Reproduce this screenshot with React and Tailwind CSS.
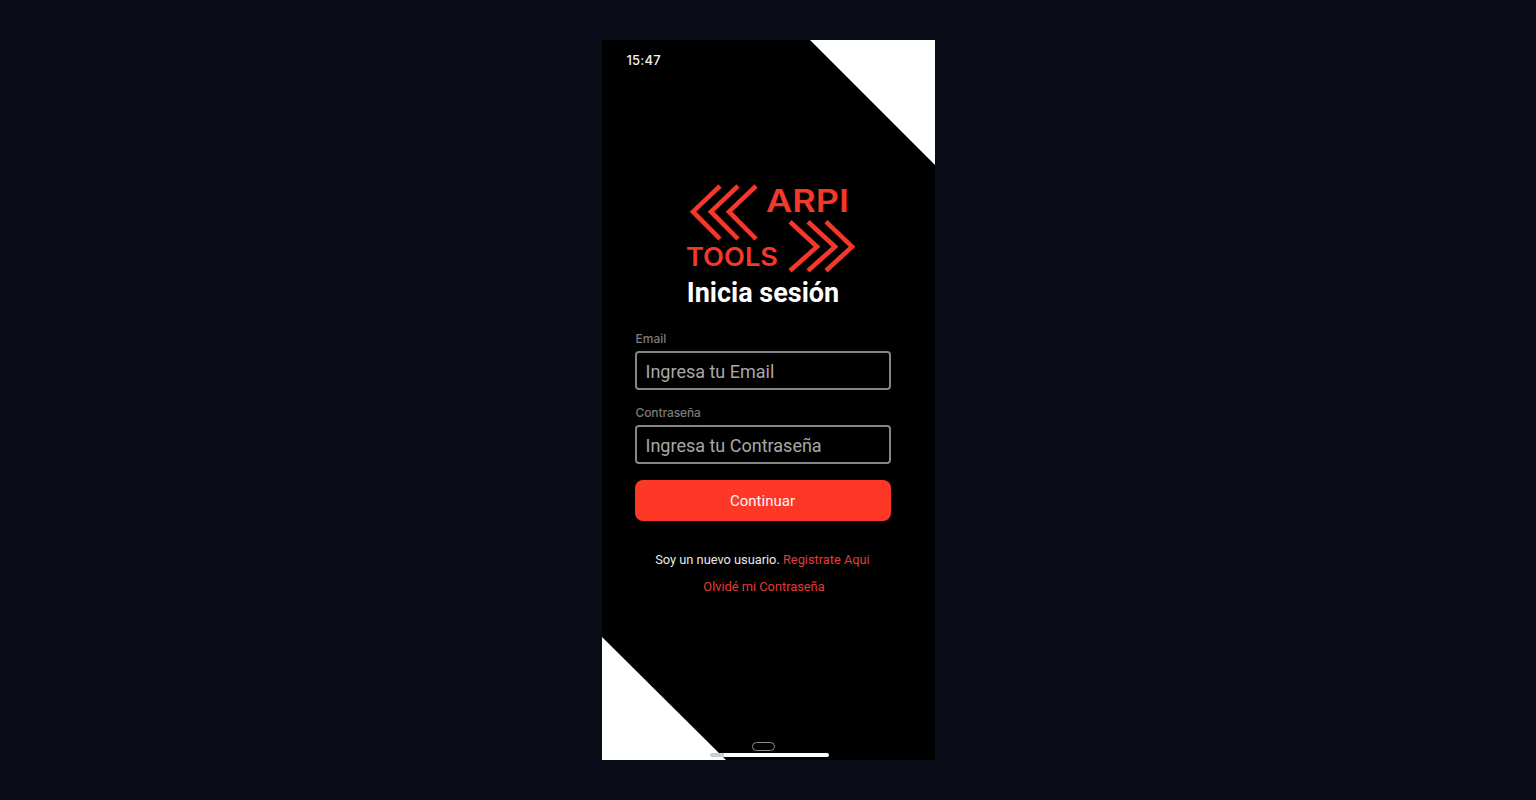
export default function App() {
  return (
    <div className="min-h-[800px] bg-[#0a0c18] flex justify-center pt-10 font-['Roboto',sans-serif]">
      <div className="relative w-[333px] h-[720px] bg-black flex flex-col overflow-hidden">
        <svg className="absolute right-0 top-0 w-[125px] h-[125px]" viewBox="0 0 125 125">
          <polygon points="0,0 125,0 125,125" fill="#ffffff" />
        </svg>
        <svg className="absolute left-0 bottom-0 w-[124px] h-[123px]" viewBox="0 0 124 123">
          <polygon points="0,0 124,123 0,123" fill="#ffffff" />
        </svg>

        <div className="pt-[12px] pl-[25px] h-[140px] shrink-0 text-[13px] leading-[16px] font-medium text-[#f2f2f2] tracking-[0.2px] font-['Inter',sans-serif]">
          15:47
        </div>

        <svg className="self-start ml-[78px] shrink-0" width="180" height="95" viewBox="0 0 180 95" fill="none">
          <g stroke="#f4392b" strokeWidth="4.6">
            <polyline points="40,6 13,31.7 40,59" />
            <polyline points="58,6 31,31.7 58,59" />
            <polyline points="76,6 49,31.7 76,59" />
            <polyline points="110,41.7 137,66.7 110,90.7" />
            <polyline points="128,41.7 155,66.7 128,90.7" />
            <polyline points="146,41.7 172,66.7 146,90.7" />
          </g>
          <text x="86" y="32" fill="#f4392b" fontFamily="Inter, sans-serif" fontWeight="600" fontSize="31" textLength="83" lengthAdjust="spacingAndGlyphs">ARPI</text>
          <text x="6" y="86" fill="#f4392b" fontFamily="Inter, sans-serif" fontWeight="600" fontSize="25" textLength="92" lengthAdjust="spacingAndGlyphs">TOOLS</text>
        </svg>

        <h1 className="text-center text-[27px] leading-[32px] font-bold text-white mt-[2px] pr-[10px]">Inicia sesión</h1>

        <div className="flex flex-col pl-[33px] mt-[23px]">
          <label className="ml-[1px] text-[12px] leading-[14px] text-[#7b7b7b] font-medium font-['Inter',sans-serif]">Email</label>
          <input
            readOnly
            placeholder="Ingresa tu Email"
            className="mt-[5px] h-[39px] w-[256px] border-2 border-[#858585] rounded-[4px] bg-black pl-[9px] pt-[1px] text-[18px] placeholder:text-[#a8a8a8] outline-none"
          />
          <label className="ml-[1px] mt-[16px] text-[12px] leading-[14px] text-[#7b7b7b] font-medium tracking-[-0.1px] font-['Inter',sans-serif]">Contraseña</label>
          <input
            readOnly
            placeholder="Ingresa tu Contraseña"
            className="mt-[5px] h-[39px] w-[256px] border-2 border-[#858585] rounded-[4px] bg-black pl-[9px] pt-[1px] text-[18px] placeholder:text-[#a8a8a8] outline-none"
          />
          <button className="mt-[16px] h-[41px] w-[256px] rounded-[8px] bg-[#ff3726] pt-[2px] text-[#f8f8f8] text-[15px] font-normal">Continuar</button>
        </div>

        <p className="mt-[31px] pr-[11px] text-center text-[12.8px] leading-[16px] text-[#e8e8e8]">
          Soy un nuevo usuario. <span className="text-[#e03c36]">Registrate Aqui</span>
        </p>
        <p className="mt-[11px] pr-[8px] text-center text-[12.8px] leading-[16px] text-[#e03c36]">Olvidé mi Contraseña</p>

        <div className="absolute left-[150px] bottom-[9px] w-[23px] h-[9px] border border-[#8a8a8a] rounded-full" />
        <div className="absolute left-[108px] bottom-[3px] w-[119px] h-[4px] rounded-full bg-white" />
        <div className="absolute left-[108px] bottom-[3px] w-[14px] h-[4px] rounded-l-full bg-[#cfcfcf]" />
      </div>
    </div>
  );
}
